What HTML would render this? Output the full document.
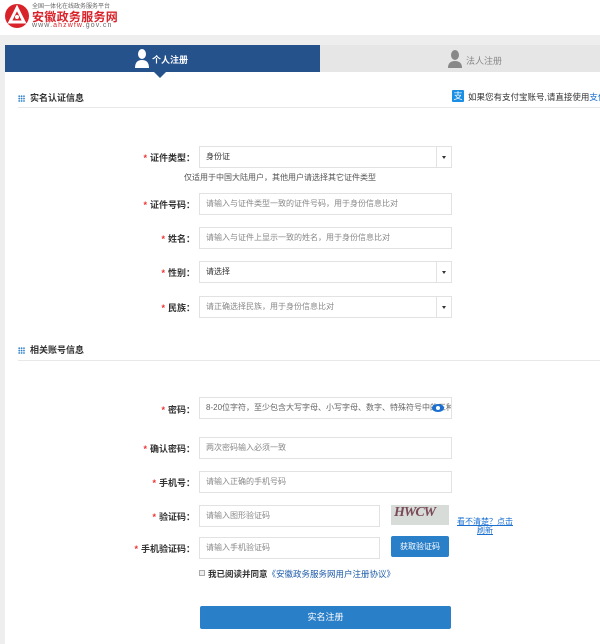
<!DOCTYPE html>
<html><head><meta charset="utf-8"><style>
*{margin:0;padding:0;box-sizing:border-box}
body{width:600px;height:644px;overflow:hidden;background:#eeeeee;font-family:"Liberation Sans","Noto Sans CJK SC",sans-serif;position:relative;color:#333}
.abs{position:absolute}
.hdr{left:0;top:0;width:600px;height:35px;background:#fff}
.main{left:5px;top:45px;width:595px;height:599px;background:#fff}
.lbl{position:absolute;right:405px;font-size:9px;color:#333;white-space:nowrap;font-weight:bold}
.lbl b{color:#e33;margin-right:3px}
.inp{position:absolute;left:199px;width:253px;height:22px;border:1px solid #e2e2e2;background:#fff;font-size:8px;color:#888;padding-left:6px;line-height:20px;white-space:nowrap;overflow:hidden}
.sel{color:#333}
.arr{position:absolute;right:0;top:0;width:15px;height:20px;border-left:1px solid #e2e2e2}
.arr:after{content:"";position:absolute;left:5px;top:9px;border:2.5px solid transparent;border-top:3px solid #333}
.sec{position:absolute;left:18px;font-size:9px;font-weight:bold;color:#333}
.grid{display:inline-block;width:7px;height:7px;margin-right:5px;vertical-align:-1px;background:radial-gradient(circle,#2a7fc9 0.9px,transparent 1px) 0 0/2.4px 2.4px}
.line{position:absolute;left:18px;width:582px;height:1px;background:#e8e8e8}
</style></head><body>
<div class="abs hdr">
<svg class="abs" style="left:4px;top:3px" width="26" height="26" viewBox="0 0 26 26"><circle cx="13" cy="13" r="12" fill="#d9232b"/><path d="M13 5 L20 19 H6 Z" fill="none" stroke="#fff" stroke-width="3"/><circle cx="13" cy="14" r="2" fill="#fff"/></svg>
<div class="abs" style="left:32px;top:1px;font-size:6px;color:#666">全国一体化在线政务服务平台</div>
<div class="abs" style="left:32px;top:8px;font-size:12px;color:#d9232b;font-weight:bold;letter-spacing:0.3px">安徽政务服务网</div>
<div class="abs" style="left:32px;top:22px;font-size:7px;color:#666;letter-spacing:1.1px">www.<span style="color:#d9232b">ahzwfw</span>.gov.cn</div>
</div>
<div class="abs main"></div>
<div class="abs" style="left:5px;top:45px;width:315px;height:27px;background:#26528c"></div>
<div class="abs" style="left:154px;top:72px;border:6px solid transparent;border-top:6px solid #26528c"></div>
<svg class="abs" style="left:135px;top:49px" width="14" height="19" viewBox="0 0 14 19"><ellipse cx="7" cy="5" rx="4" ry="5" fill="#fff"/><path d="M0 19 Q0 11 7 11 Q14 11 14 19Z" fill="#fff"/></svg>
<div class="abs" style="left:152px;top:53px;font-size:9px;color:#fff;font-weight:bold">个人注册</div>
<div class="abs" style="left:320px;top:45px;width:280px;height:27px;background:#e6e6e6"></div>
<svg class="abs" style="left:448px;top:50px" width="14" height="18" viewBox="0 0 14 18"><ellipse cx="7" cy="5" rx="4" ry="5" fill="#888"/><path d="M0 18 Q0 11 7 11 Q14 11 14 18Z" fill="#888"/></svg>
<div class="abs" style="left:466px;top:54px;font-size:9px;color:#888">法人注册</div>

<div class="sec" style="top:91px"><span class="grid"></span>实名认证信息</div>
<div class="abs" style="left:452px;top:90px;width:12px;height:12px;background:#1a8fe3;color:#fff;font-size:9px;line-height:12px;text-align:center;border-radius:1px">支</div>
<div class="abs" style="left:468px;top:91px;font-size:8.5px;color:#333;white-space:nowrap">如果您有支付宝账号,请直接使用<span style="color:#1a6fd0">支付宝</span></div>
<div class="line" style="top:107px"></div>

<div class="lbl" style="top:151px"><b>*</b>证件类型：</div>
<div class="inp sel" style="top:146px">身份证<div class="arr"></div></div>
<div class="abs" style="left:184px;top:172px;font-size:8px;color:#555">仅适用于中国大陆用户，其他用户请选择其它证件类型</div>
<div class="lbl" style="top:198px"><b>*</b>证件号码：</div>
<div class="inp" style="top:193px">请输入与证件类型一致的证件号码，用于身份信息比对</div>
<div class="lbl" style="top:232px"><b>*</b>姓名：</div>
<div class="inp" style="top:227px">请输入与证件上显示一致的姓名，用于身份信息比对</div>
<div class="lbl" style="top:266px"><b>*</b>性别：</div>
<div class="inp sel" style="top:261px">请选择<div class="arr"></div></div>
<div class="lbl" style="top:301px"><b>*</b>民族：</div>
<div class="inp" style="top:296px">请正确选择民族，用于身份信息比对<div class="arr"></div></div>

<div class="sec" style="top:343px"><span class="grid"></span>相关账号信息</div>
<div class="line" style="top:360px"></div>

<div class="lbl" style="top:403px"><b>*</b>密码：</div>
<div class="inp" style="top:397px;color:#666">8-20位字符，至少包含大写字母、小写字母、数字、特殊符号中的三种</div>
<div class="abs" style="left:432px;top:404px;width:12px;height:8px;border-radius:50%;background:#1a6fd0"><div style="margin:2px 4px;width:4px;height:4px;border-radius:50%;background:#fff"></div></div>
<div class="lbl" style="top:442px"><b>*</b>确认密码：</div>
<div class="inp" style="top:437px">两次密码输入必须一致</div>
<div class="lbl" style="top:476px"><b>*</b>手机号：</div>
<div class="inp" style="top:471px">请输入正确的手机号码</div>
<div class="lbl" style="top:510px"><b>*</b>验证码：</div>
<div class="inp" style="top:505px;width:181px">请输入图形验证码</div>
<div class="abs" style="left:391px;top:505px;width:58px;height:20px;background:#d8dcd8;overflow:hidden;font:italic bold 14px 'Liberation Serif',serif;color:#7a4a5a;letter-spacing:-1px;padding-left:3px">HWCW</div>
<div class="abs" style="left:455px;top:517px;width:60px;font-size:8px;color:#1a6fd0;text-decoration:underline;line-height:9px;text-align:center">看不清楚？点击刷新</div>
<div class="lbl" style="top:542px"><b>*</b>手机验证码：</div>
<div class="inp" style="top:537px;width:181px">请输入手机验证码</div>
<div class="abs" style="left:391px;top:536px;width:58px;height:21px;background:#2a7fc9;border-radius:2px;color:#fff;font-size:8px;line-height:21px;text-align:center">获取验证码</div>
<div class="abs" style="left:199px;top:570px;width:6px;height:6px;border:1px solid #aaa;background:#eee"></div>
<div class="abs" style="left:208px;top:568px;font-size:8.5px;color:#333;font-weight:bold">我已阅读并同意<span style="color:#1a5aa8;font-weight:normal">《安徽政务服务网用户注册协议》</span></div>
<div class="abs" style="left:200px;top:606px;width:251px;height:23px;background:#2a7fc9;border-radius:2px;color:#fff;font-size:9px;line-height:23px;text-align:center">实名注册</div>
</body></html>
